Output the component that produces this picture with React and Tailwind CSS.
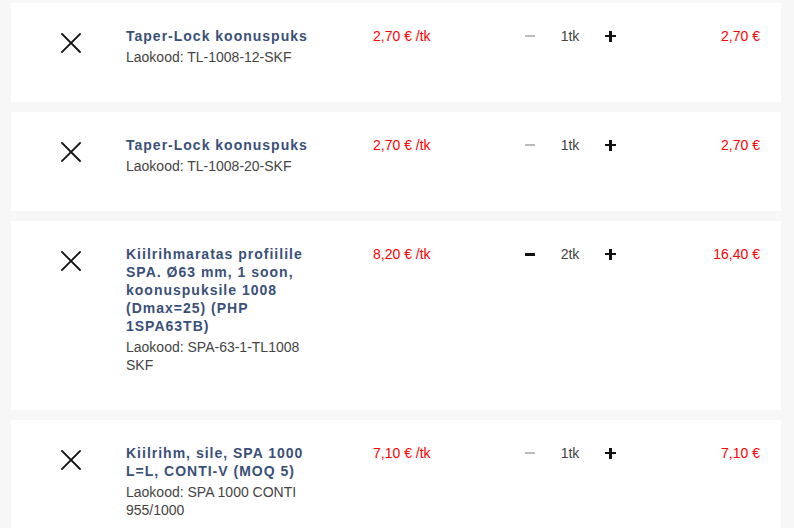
const ITEMS = [
  { title: 'Taper-Lock koonuspuks', code: 'Laokood: TL-1008-12-SKF', price: '2,70 € /tk', qty: 1, total: '2,70 €' },
  { title: 'Taper-Lock koonuspuks', code: 'Laokood: TL-1008-20-SKF', price: '2,70 € /tk', qty: 1, total: '2,70 €' },
  {
    title: 'Kiilrihmaratas profiilile SPA. Ø63 mm, 1 soon, koonuspuksile 1008 (Dmax=25) (PHP 1SPA63TB)',
    code: 'Laokood: SPA-63-1-TL1008 SKF',
    price: '8,20 € /tk',
    qty: 2,
    total: '16,40 €',
  },
  { title: 'Kiilrihm, sile, SPA 1000 L=L, CONTI-V (MOQ 5)', code: 'Laokood: SPA 1000 CONTI 955/1000', price: '7,10 € /tk', qty: 1, total: '7,10 €' },
]

function RemoveIcon() {
  return (
    <svg width="20" height="20" viewBox="0 0 20 20" className="block">
      <path d="M1 1 L19 19 M19 1 L1 19" stroke="#111" strokeWidth="1.8" strokeLinecap="square" fill="none" />
    </svg>
  )
}

function CartRow({ item }) {
  const canDecrease = item.qty > 1
  return (
    <div className="flex shrink-0 bg-white w-[770px] pt-[24px] pb-[36px] text-[14px] leading-[18px]">
      <div className="w-[115px] shrink-0 pl-[50px] pt-[6px]">
        <RemoveIcon />
      </div>

      <div className="w-[247px] shrink-0">
        <div className="w-[192px]">
          <p className="font-bold text-[14px] tracking-[1px] text-[#3a5078]">{item.title}</p>
          <p className="mt-[3px] text-[#444]">{item.code}</p>
        </div>
      </div>

      <div className="w-[152px] shrink-0 text-[#f00]">{item.price}</div>

      <div className="flex items-start shrink-0">
        <span className="flex items-center h-[18px] w-[10px]">
          <span className={`block w-[10px] ${canDecrease ? 'h-[3px] bg-[#111]' : 'h-[2px] bg-[#bbb]'}`} />
        </span>
        <span className="w-[60px] mx-[5px] text-center text-[#444]">{item.qty}tk</span>
        <span className="relative flex items-center justify-center h-[18px] w-[11px]">
          <span className="absolute w-[11px] h-[2.5px] bg-[#111]" />
          <span className="absolute w-[2.5px] h-[11px] bg-[#111]" />
        </span>
      </div>

      <div className="flex-1 pr-[21px] text-right text-[#f00]">{item.total}</div>
    </div>
  )
}

export default function App() {
  return (
    <div className="h-[528px] overflow-hidden bg-[#f7f7f7] pt-[3px] pl-[11px] flex flex-col gap-[10px] font-['Liberation_Sans',Arial,sans-serif]">
      {ITEMS.map((item, i) => (
        <CartRow key={i} item={item} />
      ))}
    </div>
  )
}
